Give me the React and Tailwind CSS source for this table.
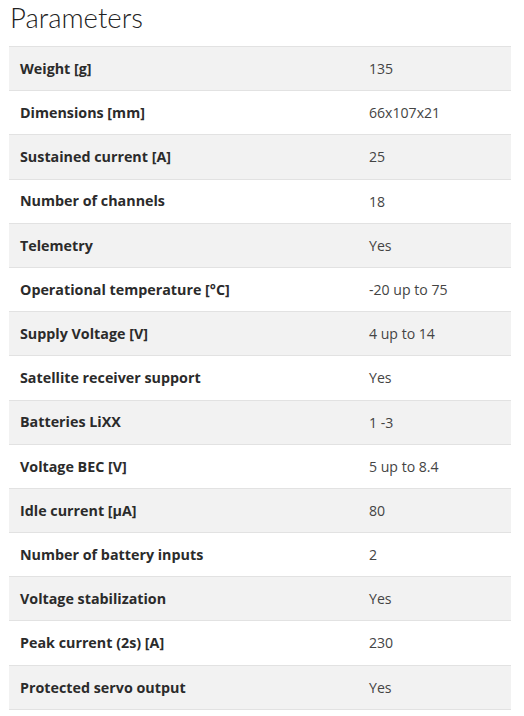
import React from "react";

const rows = [
  ["Weight [g]", "135"],
  ["Dimensions [mm]", "66x107x21"],
  ["Sustained current [A]", "25"],
  ["Number of channels", "18"],
  ["Telemetry", "Yes"],
  ["Operational temperature [°C]", "-20 up to 75"],
  ["Supply Voltage [V]", "4 up to 14"],
  ["Satellite receiver support", "Yes"],
  ["Batteries LiXX", "1 -3"],
  ["Voltage BEC [V]", "5 up to 8.4"],
  ["Idle current [µA]", "80"],
  ["Number of battery inputs", "2"],
  ["Voltage stabilization", "Yes"],
  ["Peak current (2s) [A]", "230"],
  ["Protected servo output", "Yes"],
];

const App = () => {
  return (
    <main className="min-h-screen bg-white font-['Open_Sans',sans-serif] text-[#333]">
      <section className="pl-[9px] pr-[13px] pt-[1px]">
        {/* Title */}
        <h1 className="font-['Lato',sans-serif] font-light text-[27.5px] leading-[34px] text-[#222] pl-px mb-[11px]">
          Parameters
        </h1>

        {/* Params table */}
        <div className="border-t border-[#e2e2e2]">
          {rows.map(([label, value], i) => (
            <div
              key={label}
              className={`flex items-center h-[44.2px] border-b border-[#e2e2e2] ${
                i % 2 === 0 ? "bg-[#f2f2f2]" : "bg-white"
              }`}
            >
              <div className="w-[349px] pl-[11px] font-bold text-[14.3px] text-[#2b2b2b]">{label}</div>
              <div className="pl-[11px] text-[14.1px] text-[#444]">{value}</div>
            </div>
          ))}
        </div>
      </section>
    </main>
  );
};

export default App;
